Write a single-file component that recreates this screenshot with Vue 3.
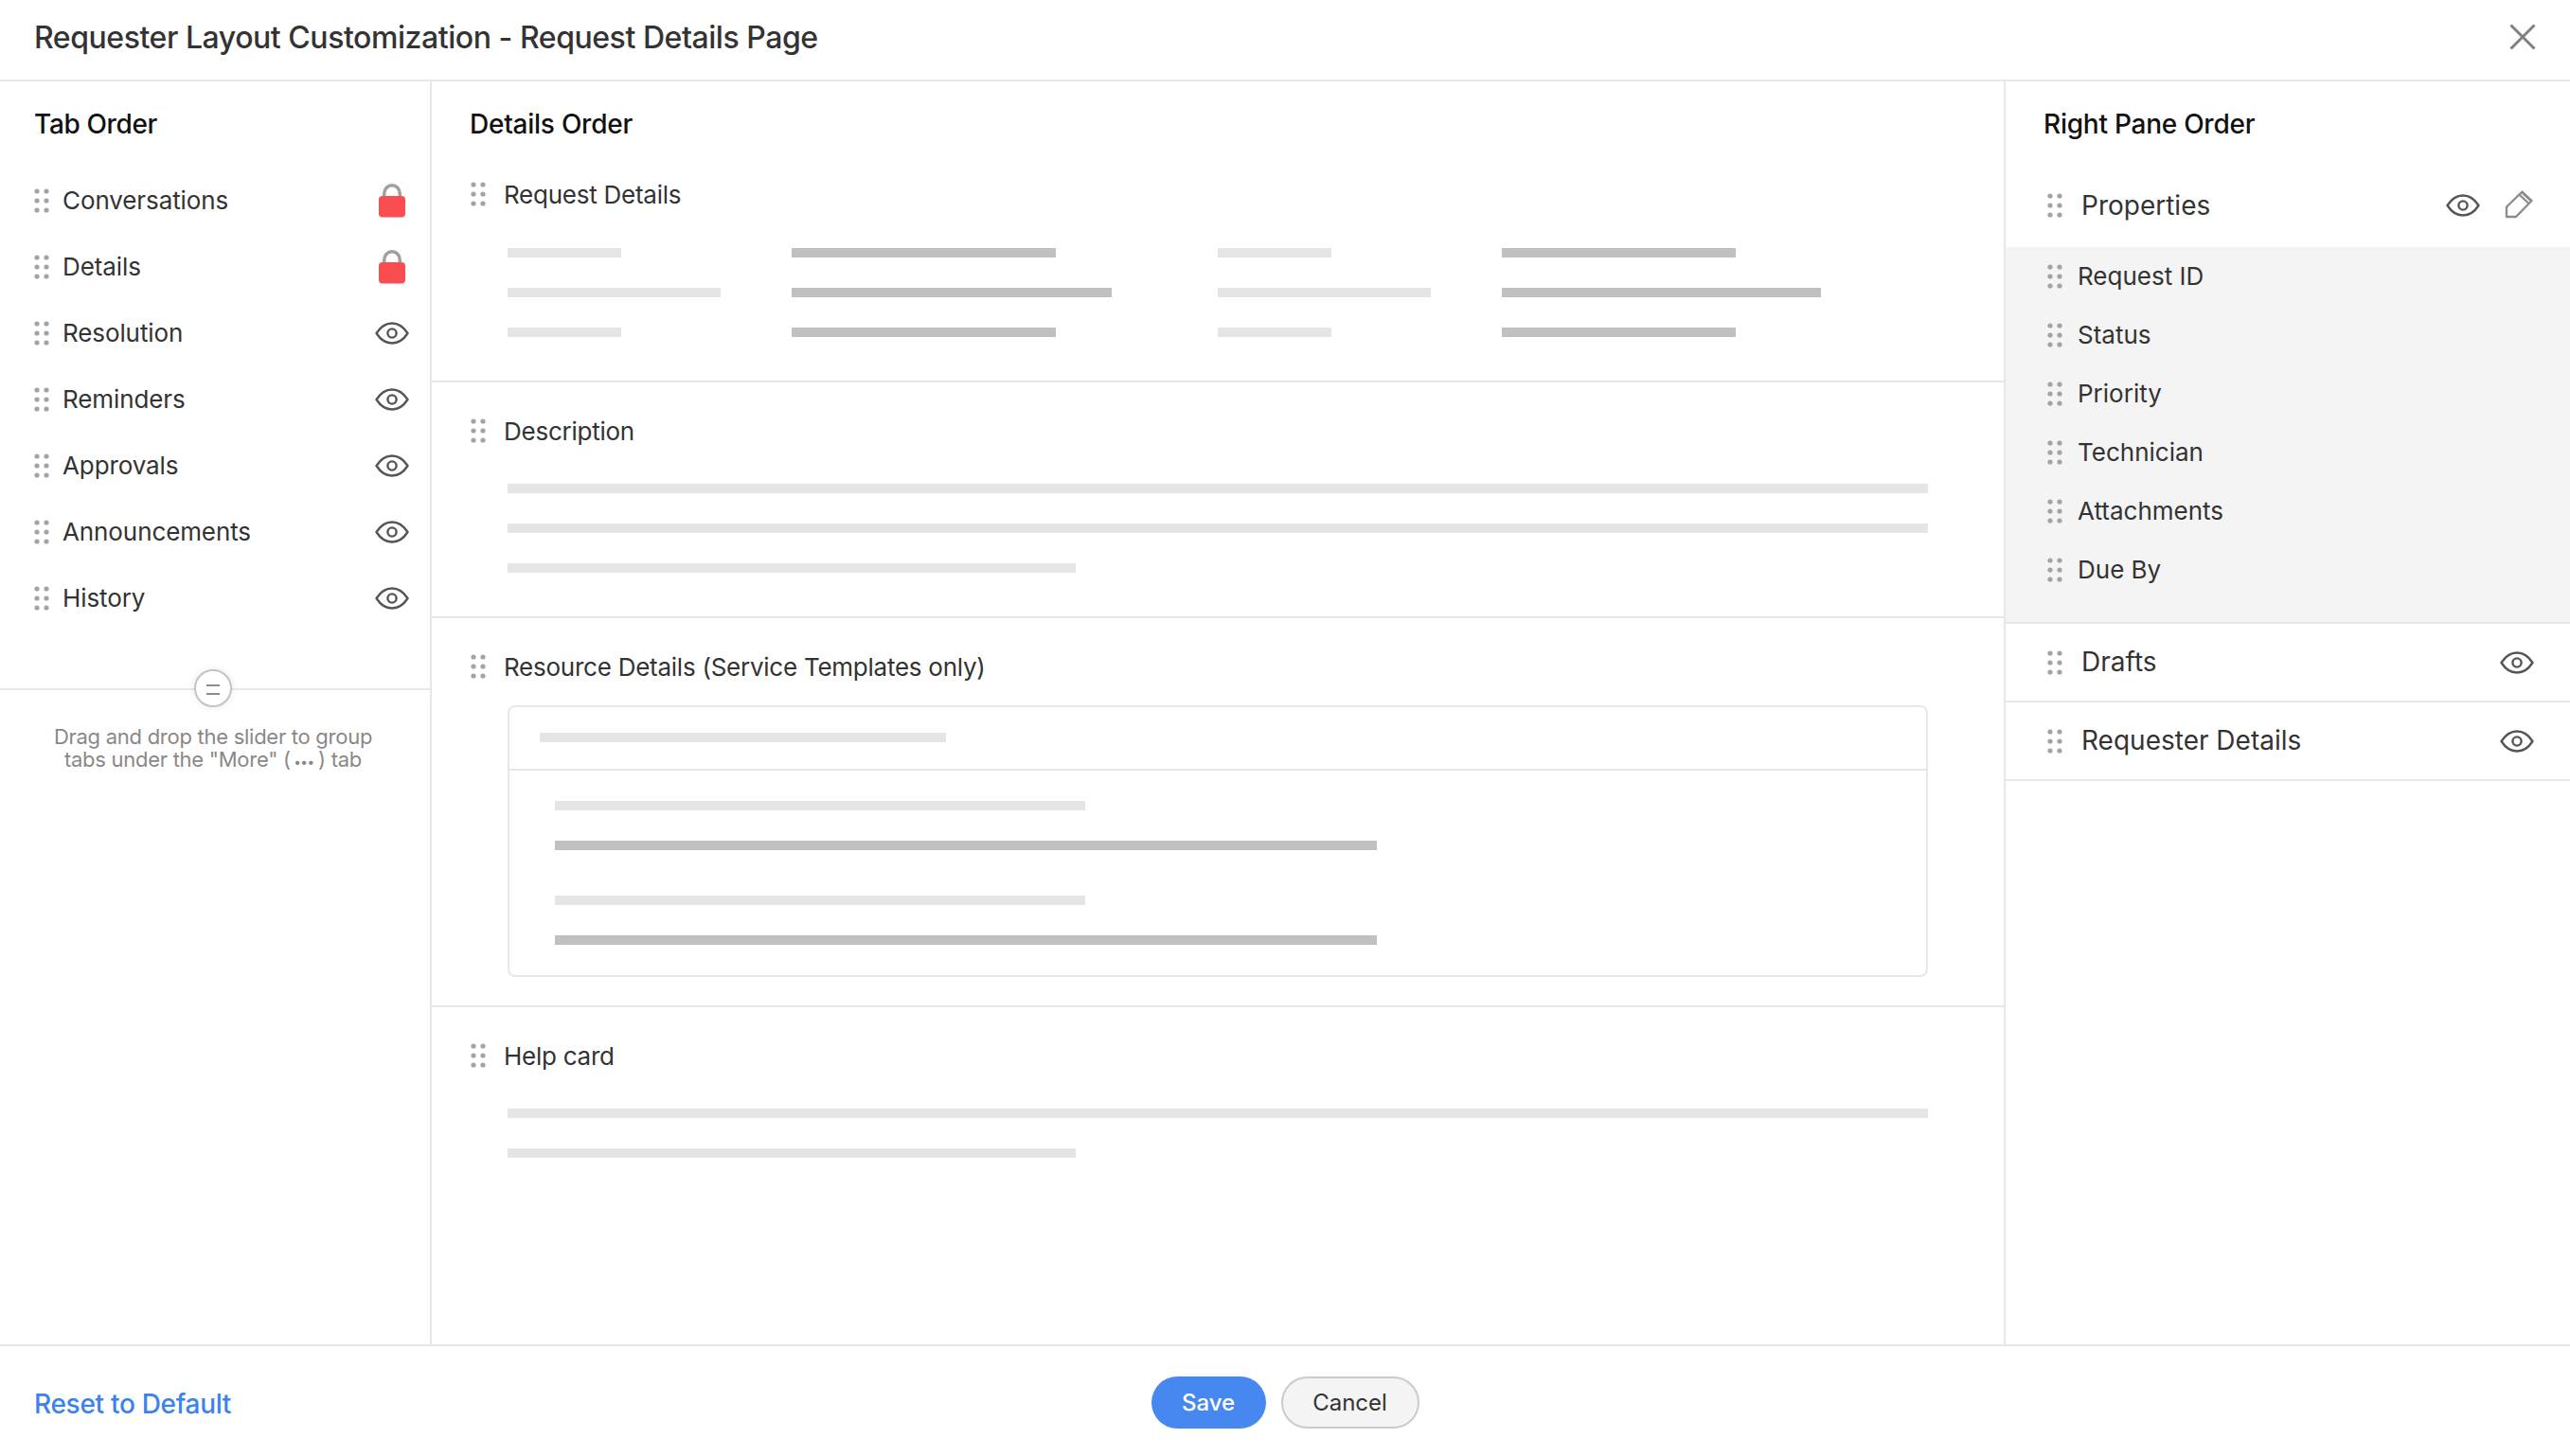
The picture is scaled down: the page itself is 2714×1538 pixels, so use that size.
<script setup>
const tabs = [
  { name: 'Conversations', locked: true },
  { name: 'Details', locked: true },
  { name: 'Resolution' },
  { name: 'Reminders' },
  { name: 'Approvals' },
  { name: 'Announcements' },
  { name: 'History' },
]
const fields = ['Request ID', 'Status', 'Priority', 'Technician', 'Attachments', 'Due By']
const grid = [
  ['c1', 'v1', 'c2', 'v2'],
  ['c1l', 'v1l', 'c2l', 'v2l'],
  ['c1', 'v1', 'c2', 'v2'],
]
</script>

<template>
  <div class="app">
    <svg class="defs" aria-hidden="true">
      <symbol id="grip" viewBox="0 0 16 26">
        <g fill="#a3a3a3">
          <circle cx="3" cy="3" r="2.6" /><circle cx="13" cy="3" r="2.6" />
          <circle cx="3" cy="13" r="2.6" /><circle cx="13" cy="13" r="2.6" />
          <circle cx="3" cy="23" r="2.6" /><circle cx="13" cy="23" r="2.6" />
        </g>
      </symbol>
      <symbol id="eye" viewBox="0 0 36 24">
        <path d="M1.5 12C6 5 11.5 1.5 18 1.5S30 5 34.5 12C30 19 24.5 22.5 18 22.5S6 19 1.5 12Z" fill="none" stroke="#555" stroke-width="2.4" stroke-linejoin="round" />
        <circle cx="18" cy="12" r="4.6" fill="none" stroke="#555" stroke-width="2.4" />
      </symbol>
      <symbol id="lock" viewBox="0 0 28 36">
        <path d="M5.75 15V10.5a8.25 8.75 0 0 1 16.5 0V15" fill="none" stroke="#a0a0a0" stroke-width="3.5" />
        <rect x="0" y="13" width="28" height="22.5" rx="4" fill="#fa4d4f" />
      </symbol>
    </svg>

    <header class="top">
      <h1>Requester Layout Customization - Request Details Page</h1>
      <svg class="close" viewBox="0 0 28 28"><path d="M1.5 1.5 26.5 26.5M26.5 1.5 1.5 26.5" stroke="#7f7f7f" stroke-width="3" fill="none" /></svg>
    </header>

    <main class="body">
      <aside class="left">
        <h2>Tab Order</h2>
        <ul class="tabs">
          <li v-for="t in tabs" :key="t.name" class="tab">
            <svg class="grip"><use href="#grip" /></svg>
            <span class="tab-name">{{ t.name }}</span>
            <svg v-if="t.locked" class="lock"><use href="#lock" /></svg>
            <svg v-else class="eye"><use href="#eye" /></svg>
          </li>
        </ul>
        <div class="slider">
          <span class="knob"></span>
        </div>
        <p class="hint">Drag and drop the slider to group<br />tabs under the "More" ( <span class="dots">•••</span> ) tab</p>
      </aside>

      <section class="center">
        <h2>Details Order</h2>

        <div class="sec sec-one">
          <div class="sec-title"><svg class="grip"><use href="#grip" /></svg>Request Details</div>
          <div class="grid">
            <div v-for="(row, i) in grid" :key="i" class="grid-row">
              <i v-for="c in row" :key="c" class="bar" :class="c"></i>
            </div>
          </div>
        </div>

        <div class="sec sec-two">
          <div class="sec-title"><svg class="grip"><use href="#grip" /></svg>Description</div>
          <div class="lines">
            <i class="bar full"></i><i class="bar full"></i><i class="bar part"></i>
          </div>
        </div>

        <div class="sec sec-three">
          <div class="sec-title"><svg class="grip"><use href="#grip" /></svg>Resource Details (Service Templates only)</div>
          <div class="box">
            <div class="box-head"><i class="bar bh"></i></div>
            <div class="box-body">
              <i class="bar b1"></i><i class="bar b2"></i>
              <i class="bar b1 gap"></i><i class="bar b2"></i>
            </div>
          </div>
        </div>

        <div class="sec sec-four">
          <div class="sec-title"><svg class="grip"><use href="#grip" /></svg>Help card</div>
          <div class="lines">
            <i class="bar full"></i><i class="bar part"></i>
          </div>
        </div>
      </section>

      <aside class="right">
        <h2>Right Pane Order</h2>
        <div class="pane-head first">
          <svg class="grip"><use href="#grip" /></svg>
          <span class="pane-name">Properties</span>
          <svg class="eye"><use href="#eye" /></svg>
          <svg class="pencil" viewBox="0 0 30 30"><path d="M2 28V17.5L18.5 1.5 28.5 11 12 28ZM15.5 4.5 25.5 14M18 2 28 11.5" fill="none" stroke="#8c8c8c" stroke-width="2.4" stroke-linejoin="round" /></svg>
        </div>
        <ul class="fields">
          <li v-for="f in fields" :key="f" class="field">
            <svg class="grip"><use href="#grip" /></svg><span class="field-name">{{ f }}</span>
          </li>
        </ul>
        <div class="pane-head">
          <svg class="grip"><use href="#grip" /></svg>
          <span class="pane-name">Drafts</span>
          <svg class="eye"><use href="#eye" /></svg>
        </div>
        <div class="pane-head">
          <svg class="grip"><use href="#grip" /></svg>
          <span class="pane-name">Requester Details</span>
          <svg class="eye"><use href="#eye" /></svg>
        </div>
      </aside>
    </main>

    <footer class="bottom">
      <a class="reset">Reset to Default</a>
      <div class="actions">
        <button class="btn save">Save</button>
        <button class="btn cancel">Cancel</button>
      </div>
    </footer>
  </div>
</template>

<style>
html, body { margin: 0; background: #fff; }
</style>

<style scoped>
.app {
  width: 2714px;
  height: 1538px;
  display: flex;
  flex-direction: column;
  overflow: hidden;
  background: #fff;
  color: #333;
  font-family: Inter, "Noto Sans", sans-serif;
}
.defs { position: absolute; width: 0; height: 0; }
.top {
  height: 84px;
  flex: none;
  display: flex;
  align-items: center;
  justify-content: space-between;
  padding: 0 36px;
  border-bottom: 2px solid #e7e7e7;
}
h1 { margin: 0 0 6px; font-size: 32px; font-weight: 500; color: #333; letter-spacing: -0.45px; }
.close { width: 28px; height: 28px; margin-top: -6px; }
.body { flex: 1; display: flex; min-height: 0; }
h2 {
  margin: 0;
  height: 68px;
  box-sizing: border-box;
  padding-top: 25px;
  line-height: 40px;
  font-size: 28px;
  font-weight: 500;
  color: #111;
  letter-spacing: -0.25px;
}
.left { width: 454px; flex: none; border-right: 2px solid #e7e7e7; }
.left h2 { padding-left: 36px; letter-spacing: -0.35px; }
.tabs { list-style: none; margin: 23px 0 0; padding: 0 0 0 36px; }
.tab { height: 70px; display: flex; align-items: center; font-size: 26px; }
.grip { width: 16px; height: 26px; flex: none; }
.tab-name { margin-left: 14px; flex: 1; letter-spacing: -0.1px; padding-bottom: 1px; }
.eye { width: 36px; height: 24px; flex: none; }
.tab .eye { margin-right: 22px; }
.lock { width: 28px; height: 36px; flex: none; margin-right: 26px; }
.slider {
  position: relative;
  margin-top: 60px;
  border-top: 2px solid #e7e7e7;
}
.knob {
  position: absolute;
  left: 205px;
  top: -22px;
  width: 40px;
  height: 40px;
  box-sizing: border-box;
  border: 2px solid #c4c4c4;
  border-radius: 50%;
  background: linear-gradient(#8c8c8c, #8c8c8c) center 14px / 14px 2px no-repeat,
    linear-gradient(#8c8c8c, #8c8c8c) center 23px / 14px 2px no-repeat, #fff;
  box-shadow: 0 0 8px rgba(0, 0, 0, 0.09);
}
.hint {
  margin: 37px 0 0;
  width: 450px;
  text-align: center;
  font-size: 22px;
  line-height: 24px;
  letter-spacing: -0.27px;
  color: #8b8787;
}
.dots { font-size: 14px; font-weight: 700; letter-spacing: 0.5px; margin: 0 -2px; }
.center { flex: 1; min-width: 0; border-right: 2px solid #e7e7e7; }
.center h2 { padding-left: 40px; }
.sec { padding: 20px 0 0 41px; box-sizing: border-box; border-bottom: 2px solid #e7e7e7; }
.sec:last-child { border-bottom: 0; }
.sec-title { height: 62px; display: flex; align-items: center; font-size: 26px; gap: 19px; letter-spacing: -0.25px; }
.bar { display: block; height: 10px; background: #e5e5e5; }
.sec-one { height: 250px; }
.sec-two { height: 249px; }
.sec-three { height: 411px; }
.grid { margin: 26px 0 0 39px; display: flex; flex-direction: column; gap: 32px; }
.grid-row { display: grid; grid-template-columns: 300px 450px 300px 1fr; }
.c1 { width: 120px; }
.c1l { width: 225px; }
.v1 { width: 279px; background: #c1bfc0; }
.v1l { width: 338px; background: #c1bfc0; }
.c2 { width: 120px; }
.c2l { width: 225px; }
.v2 { width: 247px; background: #c1bfc0; }
.v2l { width: 337px; background: #c1bfc0; }
.lines { margin: 25px 0 0 39px; display: flex; flex-direction: column; gap: 32px; }
.full { width: 1500px; }
.part { width: 600px; }
.box {
  margin: 10px 0 0 39px;
  width: 1500px;
  height: 287px;
  box-sizing: border-box;
  border: 2px solid #e7e7e7;
  border-radius: 8px;
}
.box-head { height: 67px; padding: 27px 0 0 32px; box-sizing: border-box; border-bottom: 2px solid #e7e7e7; }
.bh { width: 429px; }
.box-body { padding: 32px 0 0 48px; }
.b1 { width: 560px; }
.b2 { width: 868px; margin-top: 32px; background: #c1bfc0; }
.b1.gap { margin-top: 48px; }
.right { width: 596px; flex: none; }
.right h2 { padding-left: 40px; }
.pane-head {
  height: 81px;
  display: flex;
  align-items: center;
  padding: 0 38px 0 44px;
  border-bottom: 2px solid #e7e7e7;
  font-size: 28px;
}
.pane-head.first { height: 84px; margin-top: 21px; border-bottom: 0; margin-bottom: 2px; }
.pane-name { flex: 1; margin-left: 20px; padding-bottom: 1px; }
.pencil { width: 30px; height: 30px; margin: -2px 1px 0 26px; flex: none; }
.fields {
  list-style: none;
  margin: 0;
  padding: 0 0 24px 44px;
  background: #f4f4f4;
  border-bottom: 2px solid #e7e7e7;
}
.field { height: 62px; display: flex; align-items: center; gap: 16px; font-size: 26px; }
.field-name { padding-bottom: 1px; }
.bottom {
  height: 118px;
  flex: none;
  position: relative;
  display: flex;
  align-items: center;
  justify-content: center;
  padding-top: 3px;
  border-top: 2px solid #e7e7e7;
  box-sizing: border-box;
}
.reset {
  position: absolute;
  left: 36px;
  margin-top: 2px;
  font-size: 28px;
  font-weight: 500;
  letter-spacing: -0.3px;
  color: #3c82ee;
}
.actions { display: flex; gap: 16px; }
.btn {
  height: 55px;
  box-sizing: border-box;
  border-radius: 28px;
  font-family: inherit;
  font-size: 24px;
  padding: 0;
}
.save { width: 121px; background: #4788f0; color: #fff; border: 0; font-weight: 500; }
.cancel { width: 146px; background: #f4f4f4; color: #333; border: 2px solid #cbcbcb; }
</style>
